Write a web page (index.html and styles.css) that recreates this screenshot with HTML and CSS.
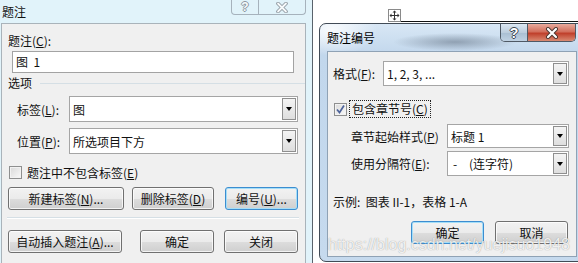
FILE: index.html
```html
<!DOCTYPE html>
<html lang="zh-CN">
<head>
  <meta charset="UTF-8">
  <meta name="viewport" content="width=device-width, initial-scale=1.0">
  <title>题注</title>
  <link rel="stylesheet" href="styles.css">
</head>
<body>
<div class="screen">

  <!-- caption dialog (inactive) -->
  <div class="win-left">
    <div class="tb-left">
      <span class="tb-title">题注</span>
      <div class="caps-flat">
        <span class="cap-flat cap-flat-help">?</span>
        <span class="cap-flat cap-flat-close">
          <svg width="14" height="11" viewBox="0 0 14 11"><path d="M3 1.5l8 8M11 1.5l-8 8" stroke="#8d979f" stroke-width="3.6" stroke-linecap="round"/><path d="M3 1.5l8 8M11 1.5l-8 8" stroke="#f7fafb" stroke-width="1.8" stroke-linecap="round"/></svg>
        </span>
      </div>
    </div>
    <div class="client client-left">
      <div class="lbl">题注(<u>C</u>):</div>
      <div class="textbox">图&nbsp;&nbsp;1</div>
      <div class="group-head"><span>选项</span><span class="rule"></span></div>
      <div class="field">
        <span class="field-lbl">标签(<u>L</u>):</span>
        <div class="combo"><span class="combo-val">图</span><span class="combo-btn"></span></div>
      </div>
      <div class="field field-next">
        <span class="field-lbl">位置(<u>P</u>):</span>
        <div class="combo"><span class="combo-val">所选项目下方</span><span class="combo-btn"></span></div>
      </div>
      <div class="check-row">
        <span class="checkbox"></span>
        <span class="check-lbl">题注中不包含标签(<u>E</u>)</span>
      </div>
      <div class="btn-row btn-row-1">
        <button class="btn w116">新建标签(<u>N</u>)...</button>
        <button class="btn w82">删除标签(<u>D</u>)</button>
        <button class="btn btn-focus w73">编号(<u>U</u>)...</button>
      </div>
      <div class="sep"></div>
      <div class="btn-row btn-row-2">
        <button class="btn w114">自动插入题注(<u>A</u>)...</button>
        <button class="btn w74">确定</button>
        <button class="btn w74">关闭</button>
      </div>
    </div>
  </div>

  <!-- document area with numbering dialog -->
  <div class="desk">
    <div class="doc-top">
      <span class="move-handle">
        <svg width="11" height="11" viewBox="0 0 11 11"><path d="M5.5 2v7M2 5.5h7" stroke="#333" stroke-width="1"/><path d="M5.5 0.5l-2 2h4zM5.5 10.5l-2-2h4zM0.5 5.5l2-2v4zM10.5 5.5l-2-2v4z" fill="#333"/></svg>
      </span>
      <span class="table-line"></span>
    </div>

    <div class="win-right">
      <div class="tb-right">
        <span class="tb-title-r">题注编号</span>
        <div class="caps">
          <span class="cap cap-help">?</span>
          <span class="cap cap-close">
            <svg width="16" height="12" viewBox="0 0 16 12"><path d="M4 2l8 8M12 2l-8 8" stroke="#4a3630" stroke-width="4" stroke-linecap="round"/><path d="M4 2l8 8M12 2l-8 8" stroke="#fff" stroke-width="2.2" stroke-linecap="round"/></svg>
          </span>
        </div>
      </div>
      <div class="client client-right">
        <div class="rfield rfield-first">
          <span class="rlbl-short">格式(<u>F</u>):</span>
          <div class="combo"><span class="combo-val">1, 2, 3, ...</span><span class="combo-btn"></span></div>
        </div>
        <div class="rcheck-row">
          <span class="checkbox checked">
            <svg width="11" height="11" viewBox="0 0 11 11"><path d="M2 5.5l2.5 3L9 1.5" fill="none" stroke="#4d639a" stroke-width="1.7"/></svg>
          </span>
          <span class="focus-lbl">包含章节号(<u>C</u>)</span>
        </div>
        <div class="rfield rfield-sub">
          <span class="rlbl-long">章节起始样式(<u>P</u>)</span>
          <div class="combo"><span class="combo-val">标题 1</span><span class="combo-btn"></span></div>
        </div>
        <div class="rfield rfield-sub rfield-sep">
          <span class="rlbl-long">使用分隔符(<u>E</u>):</span>
          <div class="combo"><span class="combo-val"><span class="dash">-</span>(连字符)</span><span class="combo-btn"></span></div>
        </div>
        <div class="example">示例:&nbsp;&nbsp;图表 II-1，表格 1-A</div>
        <div class="rbtn-row">
          <button class="btn btn-focus w73">确定</button>
          <button class="btn w73">取消</button>
        </div>
        <div class="watermark">https://blog.csdn.net/yuejisuo1948</div>
      </div>
    </div>
  </div>

</div>
</body>
</html>
```

FILE: styles.css
```css
* {
  box-sizing: border-box;
}
body {
  margin: 0;
  background: #fff;
  font-family: "Noto Sans CJK SC", "Noto Sans", sans-serif;
  font-size: 12px;
  color: #111;
}
u {
  text-underline-offset: 1px;
}
.screen {
  display: flex;
  width: 578px;
  height: 263px;
  overflow: hidden;
}

/* left window */
.win-left {
  flex: 0 0 313px;
  display: flex;
  flex-direction: column;
  background: #e1f3fa;
  border-right: 1px solid #59636c;
}
.tb-left {
  height: 23px;
  display: flex;
  justify-content: space-between;
  align-items: flex-start;
}
.tb-title {
  margin: 4px 0 0 2px;
  line-height: 16px;
}
.caps-flat {
  display: flex;
  margin-right: 6px;
  height: 15px;
  border: 1px solid #a6b2bc;
  border-top: none;
  border-radius: 0 0 4px 4px;
}
.cap-flat {
  display: flex;
  align-items: center;
  justify-content: center;
  height: 14px;
}
.cap-flat-help {
  width: 27px;
  border-right: 1px solid #a6b2bc;
  font-weight: bold;
  font-family: "Liberation Sans", sans-serif;
  font-size: 12px;
  color: #f5f9fb;
  text-shadow: 1px 0 #8d979f, -1px 0 #8d979f, 0 1px #8d979f, 0 -1px #8d979f;
}
.cap-flat-close {
  width: 46px;
}

.client {
  background: #f0f0f0;
}
.client-left {
  flex: 1;
  margin: 0 6px 0 1px;
  border: 1px solid #a9b3ba;
  border-bottom: none;
  padding: 9px 7px 0 6px;
}
.lbl {
  line-height: 16px;
}
.textbox {
  margin: 2px 4px 0 4px;
  height: 22px;
  border: 1px solid #a3a3a3;
  background: #fff;
  padding-left: 3px;
  line-height: 20px;
}
.group-head {
  display: flex;
  align-items: center;
  margin-top: 2px;
  line-height: 16px;
}
.group-head .rule {
  flex: 1;
  height: 1px;
  margin: 0 -7px 0 8px;
  background: #d5dfe5;
}
.field {
  display: flex;
  align-items: center;
  margin-top: 5px;
  padding-left: 9px;
  height: 26px;
}
.field-next {
  margin-top: 6px;
}
.field-lbl {
  width: 52px;
}

/* combo box */
.combo {
  flex: 1;
  align-self: stretch;
  display: flex;
  border: 1px solid #a5a5a5;
  background: #fff;
  padding: 1px;
}
.combo-val {
  flex: 1;
  padding-left: 2px;
  display: flex;
  align-items: center;
  white-space: pre;
}
.combo-btn {
  width: 14px;
  border: 1px solid #8f8f8f;
  background: linear-gradient(#f4f4f4, #dedede);
  display: flex;
  align-items: center;
  justify-content: center;
}
.combo-btn::after {
  content: "";
  border-left: 3.5px solid transparent;
  border-right: 3.5px solid transparent;
  border-top: 4px solid #000;
}

/* checkbox */
.check-row {
  display: flex;
  align-items: center;
  margin-top: 10px;
  height: 16px;
  padding-left: 1px;
}
.checkbox {
  width: 13px;
  height: 13px;
  border: 1px solid #8e8f8f;
  background: linear-gradient(135deg, #d8d8d8, #f9f9f9);
  box-shadow: inset 0 0 0 1px #f2f2f2;
  display: flex;
  align-items: center;
  justify-content: center;
}
.check-lbl {
  margin-left: 5px;
}

/* buttons */
.btn-row {
  display: flex;
}
.btn-row-1 {
  margin-top: 7px;
}
.btn-row-1 .w82 {
  margin-left: 8px;
}
.btn-row-1 .w73 {
  margin-left: 11px;
}
.btn-row-2 {
  margin-top: 11px;
}
.btn-row-2 .w74 {
  margin-left: 18px;
}
.btn-row-2 .w74 + .w74 {
  margin-left: 10px;
}
.btn {
  height: 23px;
  padding: 0;
  font-family: inherit;
  font-size: 12px;
  color: #111;
  border: 1px solid #707070;
  border-radius: 3px;
  background: linear-gradient(#f2f2f2 0%, #ebebeb 50%, #dddddd 51%, #cfcfcf 100%);
  box-shadow: inset 0 0 0 1px rgba(255, 255, 255, 0.75);
  line-height: 20px;
}
.btn-focus {
  border-color: #3c8dd0;
  box-shadow: inset 0 0 0 1px #a4def8;
}
.w116 { width: 116px; }
.w114 { width: 114px; }
.w82 { width: 82px; }
.w74 { width: 74px; }
.w73 { width: 73px; }
.sep {
  margin: 7px -1px 0;
  height: 2px;
  border-top: 1px solid #d5dfe5;
  border-bottom: 1px solid #fff;
}

/* right side */
.desk {
  flex: 1;
  display: flex;
  flex-direction: column;
  padding-left: 6px;
  min-width: 0;
}
.doc-top {
  height: 23px;
  display: flex;
  align-items: flex-end;
}
.move-handle {
  margin: 0 0 1px 69px;
  width: 13px;
  height: 13px;
  border: 1px solid #8a8a8a;
  background: #fff;
  display: flex;
  align-items: center;
  justify-content: center;
}
.table-line {
  flex: 1;
  height: 1px;
  margin-bottom: 1px;
  background: #111;
}
.win-right {
  flex: 0 0 auto;
  width: 266px;
  border: 1px solid #414b56;
  border-radius: 7px;
  padding: 0 7px 4px 7px;
  background:
    radial-gradient(ellipse 62px 9px at 135px 18px, rgba(105, 120, 138, 0.6), rgba(105, 120, 138, 0)),
    radial-gradient(ellipse 45px 26px at 12px 6px, rgba(255, 255, 255, 0.85), rgba(255, 255, 255, 0)),
    linear-gradient(#d8e7f5, #c2d7ec 30px, #c6daee);
}
.tb-right {
  height: 27px;
  display: flex;
  justify-content: space-between;
  align-items: flex-start;
}
.tb-title-r {
  margin-top: 6px;
  line-height: 16px;
  color: #000;
}
.caps {
  display: flex;
  margin-right: 1px;
  height: 18px;
  border: 1px solid #4f5965;
  border-top: none;
  border-radius: 0 0 5px 5px;
  overflow: hidden;
}
.cap {
  display: flex;
  align-items: center;
  justify-content: center;
  height: 17px;
}
.cap-help {
  width: 27px;
  border-right: 1px solid #4f5965;
  background: linear-gradient(#dce7f2, #bccddd 50%, #a9bed2 51%, #c0d2e3);
  font-family: "Liberation Sans", sans-serif;
  font-weight: bold;
  font-size: 14px;
  color: #fff;
  text-shadow: 1px 0 #3c4652, -1px 0 #3c4652, 0 1px #3c4652, 0 -1px #3c4652;
}
.cap-close {
  width: 47px;
  background: linear-gradient(#e9aa9c, #d26f5d 45%, #c0402c 55%, #d98a72);
}
.client-right {
  position: relative;
  height: 206px;
  border: 1px solid #8fa2b5;
  padding: 9px 7px 0 5px;
}
.rfield {
  display: flex;
  align-items: center;
}
.rfield-first {
  height: 25px;
}
.rlbl-short {
  width: 50px;
}
.rcheck-row {
  display: flex;
  align-items: center;
  margin-top: 14px;
  height: 18px;
  padding-left: 1px;
}
.checkbox.checked {
  background: linear-gradient(135deg, #dadada, #fafafa);
}
.focus-lbl {
  margin-left: 2px;
  padding: 0 2px;
  height: 18px;
  line-height: 16px;
  border: 1px dotted #222;
}
.rfield-sub {
  margin-top: 6px;
  height: 24px;
  padding-left: 18px;
}
.rfield-sep {
  margin-top: 3px;
  height: 25px;
}
.rlbl-long {
  width: 96px;
}
.combo-val .dash {
  display: inline-block;
  width: 18px;
  padding-left: 2px;
}
.example {
  margin-top: 18px;
  line-height: 16px;
}
.rbtn-row {
  display: flex;
  justify-content: flex-end;
  margin-top: 11px;
  padding-right: 1px;
  gap: 11px;
}
.watermark {
  position: absolute;
  left: 0;
  top: 184px;
  font-family: "Liberation Sans", sans-serif;
  font-size: 16px;
  line-height: 18px;
  color: rgba(255, 255, 255, 0.85);
  text-shadow: 0 0 1px rgba(80, 80, 80, 0.6);
  white-space: nowrap;
  pointer-events: none;
}
```
